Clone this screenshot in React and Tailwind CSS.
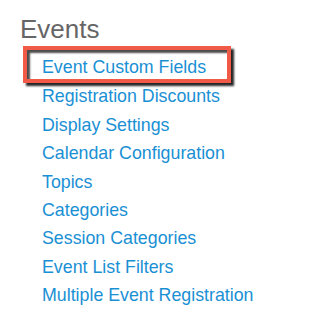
const links = [
  'Event Custom Fields',
  'Registration Discounts',
  'Display Settings',
  'Calendar Configuration',
  'Topics',
  'Categories',
  'Session Categories',
  'Event List Filters',
  'Multiple Event Registration',
];

export default function App() {
  return (
    <div className="w-[326px] h-[325px] bg-white pl-[20px] pt-[14px] font-['Liberation_Sans',Arial,sans-serif]">
      <h2 className="text-[26px] leading-[30px] text-[#666666]">Events</h2>
      <ul className="mt-[8.6px] pl-[22px]">
        {links.map((label, i) => (
          <li
            key={label}
            className={`relative text-[17.8px] leading-[28.4px] ${i === 0 ? 'mb-[1.3px]' : ''}`}
          >
            {i === 0 && (
              <span className="absolute left-[-19px] top-[-6.6px] w-[208px] h-[37px] border-[4px] border-[#f25a48] shadow-[3px_3px_2px_rgba(0,0,0,0.85),inset_3px_3px_2px_rgba(0,0,0,0.7)]" />
            )}
            <a href="#" className="text-[#1a90d4]">{label}</a>
          </li>
        ))}
      </ul>
    </div>
  );
}
